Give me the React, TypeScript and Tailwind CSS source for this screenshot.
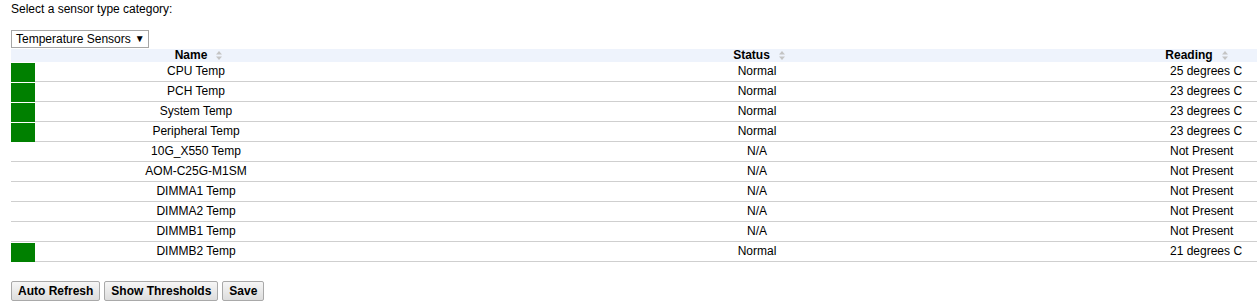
const ROWS = [
  { name: 'CPU Temp', status: 'Normal', reading: '25 degrees C', ok: true },
  { name: 'PCH Temp', status: 'Normal', reading: '23 degrees C', ok: true },
  { name: 'System Temp', status: 'Normal', reading: '23 degrees C', ok: true },
  { name: 'Peripheral Temp', status: 'Normal', reading: '23 degrees C', ok: true },
  { name: '10G_X550 Temp', status: 'N/A', reading: 'Not Present', ok: false },
  { name: 'AOM-C25G-M1SM', status: 'N/A', reading: 'Not Present', ok: false },
  { name: 'DIMMA1 Temp', status: 'N/A', reading: 'Not Present', ok: false },
  { name: 'DIMMA2 Temp', status: 'N/A', reading: 'Not Present', ok: false },
  { name: 'DIMMB1 Temp', status: 'N/A', reading: 'Not Present', ok: false },
  { name: 'DIMMB2 Temp', status: 'Normal', reading: '21 degrees C', ok: true },
]

const SortIcon = () => (
  <svg width="6" height="9" viewBox="0 0 6 9" className="ml-[9px] inline-block">
    <path d="M3 0 L6 3.5 L0 3.5 Z" fill="#c4c4c4" />
    <path d="M3 9 L6 5.5 L0 5.5 Z" fill="#c4c4c4" />
  </svg>
)

const Header = ({ label, className = '' }: { label: string; className?: string }) => (
  <div className={`flex h-[13px] items-center justify-center font-bold leading-[13px] ${className}`}>
    <span>{label}</span>
    <SortIcon />
  </div>
)

const Button = ({ label }: { label: string }) => (
  <button className="h-[20px] rounded-[2px] border border-[#a9a9a9] bg-gradient-to-b from-[#f6f6f6] to-[#dddddd] px-[6px] text-[12px] font-bold leading-[18px] text-black">
    {label}
  </button>
)

const App = () => {
  return (
    <div className="h-[307px] w-[1257px] bg-white pl-[11px] text-[12px] text-black [font-family:Arial,'Liberation_Sans',sans-serif]">
      <p className="pt-[2px] leading-[14px]">Select a sensor type category:</p>

      <div className="mt-[14px] flex h-[18px] w-[138px] items-center border border-[#a6a6a6] bg-white pl-[4px] leading-[16px]">
        Temperature Sensors
        <span className="ml-[4px] text-[10px]">▼</span>
      </div>

      <div className="mt-px">
        <div className="grid grid-cols-[24px_322px_800px_100px] bg-[#eef3fc]">
          <div />
          <Header label="Name" className="pl-[5px]" />
          <Header label="Status" className="pl-[4px]" />
          <Header label="Reading" className="pr-[21px]" />
        </div>
        {ROWS.map((row) => (
          <div key={row.name} className="grid h-[20px] grid-cols-[24px_322px_800px_100px] border-b border-[#cfcfcf] leading-[19px]">
            <div className={row.ok ? 'mt-px h-[19px] bg-[#008000]' : ''} />
            <div className="text-center">{row.name}</div>
            <div className="text-center">{row.status}</div>
            <div className="pl-[13px]">{row.reading}</div>
          </div>
        ))}
      </div>

      <div className="mt-[19px] flex gap-[4px]">
        <Button label="Auto Refresh" />
        <Button label="Show Thresholds" />
        <Button label="Save" />
      </div>
    </div>
  )
}

export default App
